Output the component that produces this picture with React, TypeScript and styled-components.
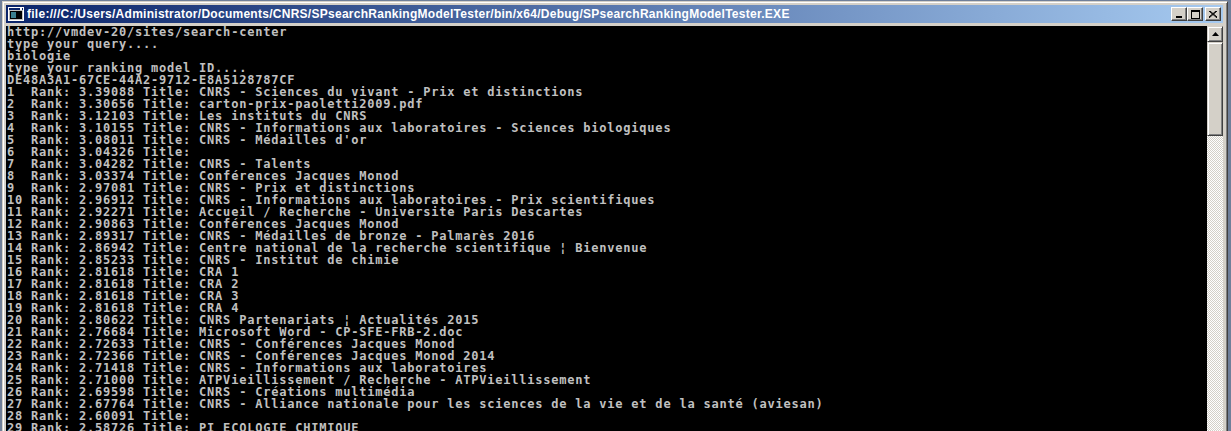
import styled, { createGlobalStyle } from "styled-components";

const GlobalStyle = createGlobalStyle`
  html, body {
    margin: 0;
    padding: 0;
    background: #6f7f99;
    overflow: hidden;
  }
`;

const header = [
  "http://vmdev-20/sites/search-center",
  "type your query....",
  "biologie",
  "type your ranking model ID....",
  "DE48A3A1-67CE-44A2-9712-E8A5128787CF",
];

const results: [string, string][] = [
  ["3.39088", "CNRS - Sciences du vivant - Prix et distinctions"],
  ["3.30656", "carton-prix-paoletti2009.pdf"],
  ["3.12103", "Les instituts du CNRS"],
  ["3.10155", "CNRS - Informations aux laboratoires - Sciences biologiques"],
  ["3.08011", "CNRS - Médailles d'or"],
  ["3.04326", ""],
  ["3.04282", "CNRS - Talents"],
  ["3.03374", "Conférences Jacques Monod"],
  ["2.97081", "CNRS - Prix et distinctions"],
  ["2.96912", "CNRS - Informations aux laboratoires - Prix scientifiques"],
  ["2.92271", "Accueil / Recherche - Universite Paris Descartes"],
  ["2.90863", "Conférences Jacques Monod"],
  ["2.89317", "CNRS - Médailles de bronze - Palmarès 2016"],
  ["2.86942", "Centre national de la recherche scientifique ¦ Bienvenue"],
  ["2.85233", "CNRS - Institut de chimie"],
  ["2.81618", "CRA 1"],
  ["2.81618", "CRA 2"],
  ["2.81618", "CRA 3"],
  ["2.81618", "CRA 4"],
  ["2.80622", "CNRS Partenariats ¦ Actualités 2015"],
  ["2.76684", "Microsoft Word - CP-SFE-FRB-2.doc"],
  ["2.72633", "CNRS - Conférences Jacques Monod"],
  ["2.72366", "CNRS - Conférences Jacques Monod 2014"],
  ["2.71418", "CNRS - Informations aux laboratoires"],
  ["2.71000", "ATPVieillissement / Recherche - ATPVieillissement"],
  ["2.69598", "CNRS - Créations multimédia"],
  ["2.67764", "CNRS - Alliance nationale pour les sciences de la vie et de la santé (aviesan)"],
  ["2.60091", ""],
  ["2.58726", "PI ECOLOGIE CHIMIQUE"],
];

const Desktop = styled.div`
  height: 431px;
  padding: 1px 0 0 2px;
  box-sizing: border-box;
`;

const Window = styled.div`
  width: 1226px;
  height: 460px;
  box-sizing: border-box;
  background: #d4d0c8;
  border-top: 1px solid #d4d0c8;
  border-left: 1px solid #d4d0c8;
  border-right: 1px solid #404040;
  box-shadow: inset 1px 1px 0 #ffffff, inset -1px 0 0 #808080;
  padding: 3px 4px 0 3px;
  display: flex;
  flex-direction: column;
`;

const TitleBar = styled.div`
  height: 18px;
  display: flex;
  align-items: center;
  padding: 0 2px 0 2px;
  gap: 3px;
  background: linear-gradient(to right, #0a246a, #a6caf0);
`;

const Title = styled.div`
  flex: 1;
  color: #ffffff;
  font-family: "Liberation Sans", Arial, sans-serif;
  font-weight: bold;
  font-size: 12px;
  letter-spacing: 0.27px;
  white-space: nowrap;
  overflow: hidden;
`;

const Buttons = styled.div`
  display: flex;
  align-items: center;
`;

const CaptionButton = styled.div<{ $gap?: number }>`
  width: 16px;
  height: 14px;
  box-sizing: border-box;
  margin-left: ${(p) => p.$gap ?? 0}px;
  background: #d4d0c8;
  border-top: 1px solid #ffffff;
  border-left: 1px solid #ffffff;
  border-right: 1px solid #404040;
  border-bottom: 1px solid #404040;
  box-shadow: inset -1px -1px 0 #808080;
  display: flex;
  align-items: center;
  justify-content: center;
`;

const Body = styled.div`
  flex: 1;
  display: flex;
  margin-top: 2px;
  border-top: 1px solid #d4d0c8;
`;

const Console = styled.div`
  flex: 1;
  background: #000000;
  padding: 0 0 0 1px;
  overflow: hidden;
`;

const Line = styled.div`
  height: 12px;
  line-height: 12px;
  color: #c0c0c0;
  font-family: "DejaVu Sans Mono", "Liberation Mono", monospace;
  font-weight: bold;
  font-size: 12px;
  letter-spacing: 0.78px;
  white-space: pre;
`;

const ScrollBar = styled.div`
  width: 16px;
  display: flex;
  flex-direction: column;
  background: repeating-conic-gradient(#d4d0c8 0 25%, #ffffff 0 50%) 0 0 / 2px 2px;
`;

const ScrollPart = styled.div<{ $h: number }>`
  height: ${(p) => p.$h}px;
  box-sizing: border-box;
  background: #d4d0c8;
  border-top: 1px solid #d4d0c8;
  border-left: 1px solid #d4d0c8;
  border-right: 1px solid #404040;
  border-bottom: 1px solid #404040;
  box-shadow: inset 1px 1px 0 #ffffff, inset -1px -1px 0 #808080;
  display: flex;
  align-items: center;
  justify-content: center;
`;

function ConsoleIcon() {
  return (
    <svg width="16" height="16" viewBox="0 0 16 16">
      <rect x="0.5" y="1.5" width="15" height="13" fill="#c0c0c0" stroke="#ffffff" />
      <rect x="1" y="2" width="14" height="2" fill="#0a246a" />
      <rect x="2" y="5" width="12" height="8" fill="#000000" />
      <rect x="3" y="6" width="5" height="6" fill="#3a7f8f" />
      <rect x="12" y="2" width="2" height="2" fill="#ffffff" />
    </svg>
  );
}

function pad(n: number) {
  const s = String(n);
  return s + " ".repeat(3 - s.length);
}

function App() {
  const lines = [
    ...header,
    ...results.map(([rank, title], i) => `${pad(i + 1)}Rank: ${rank} Title: ${title}`),
  ];

  return (
    <>
      <GlobalStyle />
      <Desktop>
        <Window>
          <TitleBar>
            <ConsoleIcon />
            <Title>
              file:///C:/Users/Administrator/Documents/CNRS/SPsearchRankingModelTester/bin/x64/Debug/SPsearchRankingModelTester.EXE
            </Title>
            <Buttons>
              <CaptionButton>
                <svg width="8" height="8" viewBox="0 0 8 8">
                  <rect x="1" y="6" width="6" height="2" fill="#000" />
                </svg>
              </CaptionButton>
              <CaptionButton>
                <svg width="9" height="9" viewBox="0 0 9 9">
                  <rect x="0.5" y="0.5" width="8" height="8" fill="none" stroke="#000" />
                  <rect x="0" y="0" width="9" height="2" fill="#000" />
                </svg>
              </CaptionButton>
              <CaptionButton $gap={2}>
                <svg width="8" height="7" viewBox="0 0 8 7">
                  <path d="M0 0 L8 7 M1 0 L8 6 M8 0 L0 7 M7 0 L0 6" stroke="#000" strokeWidth="1" />
                </svg>
              </CaptionButton>
            </Buttons>
          </TitleBar>
          <Body>
            <Console>
              {lines.map((l, i) => (
                <Line key={i}>{l}</Line>
              ))}
            </Console>
            <ScrollBar>
              <ScrollPart $h={16}>
                <svg width="7" height="4" viewBox="0 0 7 4">
                  <path d="M3.5 0 L7 4 L0 4 Z" fill="#000" />
                </svg>
              </ScrollPart>
              <ScrollPart $h={94} />
            </ScrollBar>
          </Body>
        </Window>
      </Desktop>
    </>
  );
}

export default App;
